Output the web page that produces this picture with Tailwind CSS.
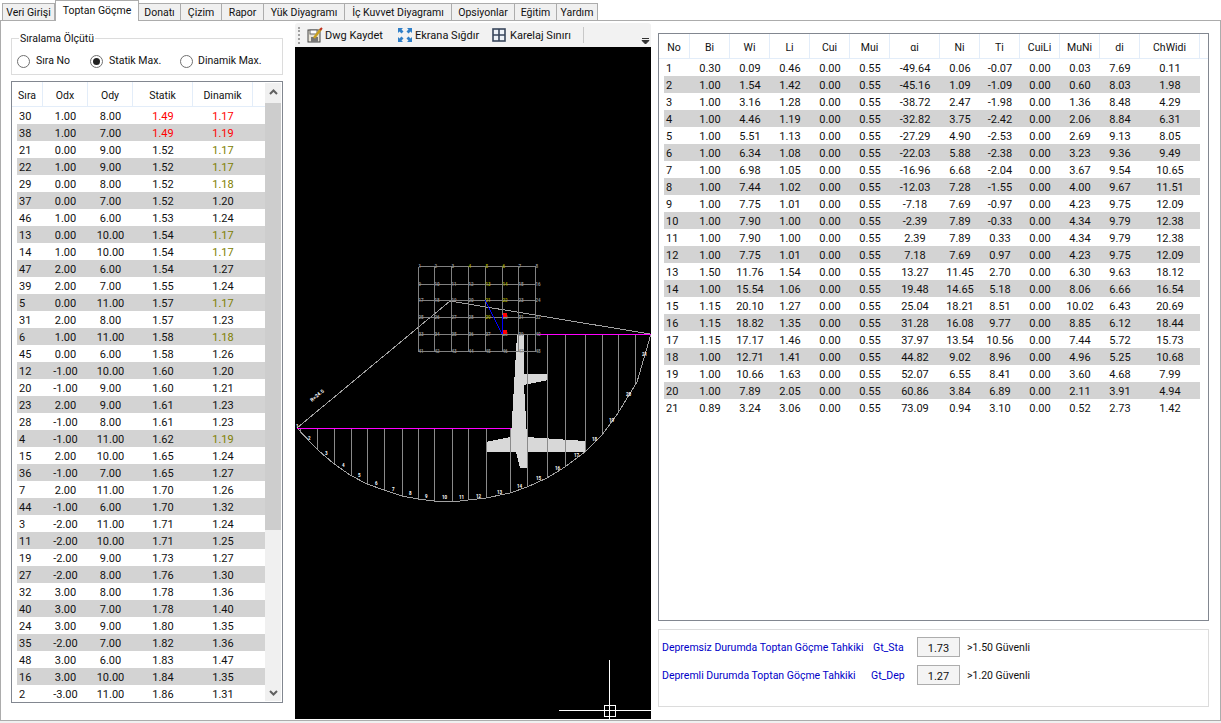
<!DOCTYPE html>
<html lang="en">

<head>
  <meta charset="UTF-8">
  <title>Toptan Göçme</title>
  <script src="https://cdn.jsdelivr.net/npm/@tailwindcss/browser@4"></script>
</head>

<body class="bg-[#f0f0f0] m-0 w-[1221px] h-[723px] overflow-hidden font-['Roboto'] text-[10.5px] text-[#111] leading-none">
  <!-- tabs -->
  <div class="h-[20px] bg-white flex items-end pl-[2px] relative z-10">
    <div class="w-[53px] h-[17px] pt-[2px] border border-b-0 border-[#acacac] bg-[#f0f0f0] flex items-center justify-center">Veri Girişi</div>
    <div class="w-[84px] h-[21px] -mb-px border border-b-0 border-[#acacac] bg-white flex items-center justify-center">Toptan Göçme</div>
    <div class="w-[42px] h-[17px] pt-[2px] border border-b-0 border-l-0 border-[#acacac] bg-[#f0f0f0] flex items-center justify-center">Donatı</div>
    <div class="w-[41px] h-[17px] pt-[2px] border border-b-0 border-l-0 border-[#acacac] bg-[#f0f0f0] flex items-center justify-center">Çizim</div>
    <div class="w-[42px] h-[17px] pt-[2px] border border-b-0 border-l-0 border-[#acacac] bg-[#f0f0f0] flex items-center justify-center">Rapor</div>
    <div class="w-[81px] h-[17px] pt-[2px] border border-b-0 border-l-0 border-[#acacac] bg-[#f0f0f0] flex items-center justify-center">Yük Diyagramı</div>
    <div class="w-[107px] h-[17px] pt-[2px] border border-b-0 border-l-0 border-[#acacac] bg-[#f0f0f0] flex items-center justify-center">İç Kuvvet Diyagramı</div>
    <div class="w-[63px] h-[17px] pt-[2px] border border-b-0 border-l-0 border-[#acacac] bg-[#f0f0f0] flex items-center justify-center">Opsiyonlar</div>
    <div class="w-[42px] h-[17px] pt-[2px] border border-b-0 border-l-0 border-[#acacac] bg-[#f0f0f0] flex items-center justify-center">Eğitim</div>
    <div class="w-[41px] h-[17px] pt-[2px] border border-b-0 border-l-0 border-[#acacac] bg-[#f0f0f0] flex items-center justify-center">Yardım</div>
  </div>

  <div class="h-[701px] bg-white border border-[#acacac] flex">
    <!-- left column -->
    <div class="ml-[10px] w-[272px] pt-[10px]">
      <fieldset class="h-[44px] border border-[#dcdcdc] flex items-center">
        <legend class="ml-[7px] px-[1px] leading-[15px]">Sıralama Ölçütü</legend>
        <div class="flex items-center pt-[3px]">
          <span class="ml-[5px] w-[13px] h-[13px] rounded-full border border-[#707070] bg-white"></span>
          <span class="ml-[6px] w-[54px]">Sıra No</span>
          <span class="w-[13px] h-[13px] rounded-full border border-[#707070] bg-white flex items-center justify-center"><span class="w-[7px] h-[7px] rounded-full bg-[#222]"></span></span>
          <span class="ml-[6px] w-[71px]">Statik Max.</span>
          <span class="w-[13px] h-[13px] rounded-full border border-[#707070] bg-white"></span>
          <span class="ml-[5px]">Dinamik Max.</span>
        </div>
      </fieldset>
      <div class="mt-[6px] h-[622px] border border-[#828790] flex">
        <div class="w-[253px]">
          <div class="h-[25px] flex border-b border-[#e3edf9]">
            <div class="w-[31px] pt-[4px] border-r border-[#e3edf9] flex items-center justify-center">Sıra</div>
            <div class="w-[45px] pt-[4px] border-r border-[#e3edf9] flex items-center justify-center">Odx</div>
            <div class="w-[45px] pt-[4px] border-r border-[#e3edf9] flex items-center justify-center">Ody</div>
            <div class="w-[60px] pt-[4px] border-r border-[#e3edf9] flex items-center justify-center">Statik</div>
            <div class="w-[60px] pt-[4px] border-r border-[#e3edf9] flex items-center justify-center">Dinamik</div>
            <div class="w-[12px]"></div>
          </div>
          <div id="left-rows" class="pl-[5px] text-[11px]"></div>
        </div>
        <div class="w-[16px] mt-px mb-px bg-[#f0f0f0] flex flex-col items-center">
          <svg class="mt-[6px] mb-[8px]" width="9" height="6" viewBox="0 0 9 6"><path d="M1 5 L4.5 1.5 L8 5" fill="none" stroke="#606060" stroke-width="2"/></svg>
          <div class="w-full h-[427px] bg-[#cdcdcd]"></div>
          <svg class="mt-auto mb-[5px]" width="9" height="6" viewBox="0 0 9 6"><path d="M1 1 L4.5 4.5 L8 1" fill="none" stroke="#606060" stroke-width="2"/></svg>
        </div>
      </div>
    </div>

    <!-- drawing column -->
    <div class="ml-[12px] w-[356px] pt-[2px] pb-px flex flex-col">
      <div class="h-[24px] bg-[#f2f2f2] rounded-t-[3px] flex items-center relative">
        <div class="ml-[3px] w-[2px] h-[17px] border-l-2 border-dotted border-[#a0a0a0]"></div>
        <svg class="ml-[7px]" width="16" height="16" viewBox="0 0 16 16">
          <rect x="1" y="3" width="12" height="12" fill="#e8e4d8" stroke="#444"/>
          <rect x="3" y="3" width="7" height="4" fill="#fff" stroke="#666"/>
          <rect x="4" y="10" width="7" height="5" fill="#777"/>
          <path d="M7 11 L14 2" stroke="#c8a020" stroke-width="2.5"/>
          <path d="M13 3 L15 1" stroke="#c03020" stroke-width="2"/>
        </svg>
        <span class="ml-[2px] w-[73px] text-[11px]">Dwg Kaydet</span>
        <svg width="14" height="14" viewBox="0 0 14 14" fill="#2f7fc8">
          <path d="M0 0 H5 L3.5 1.5 L5.5 3.5 L3.5 5.5 L1.5 3.5 L0 5 Z"/>
          <path d="M14 0 V5 L12.5 3.5 L10.5 5.5 L8.5 3.5 L10.5 1.5 L9 0 Z"/>
          <path d="M0 14 V9 L1.5 10.5 L3.5 8.5 L5.5 10.5 L3.5 12.5 L5 14 Z"/>
          <path d="M14 14 H9 L10.5 12.5 L8.5 10.5 L10.5 8.5 L12.5 10.5 L14 9 Z"/>
        </svg>
        <span class="ml-[3px] w-[77px] text-[11px]">Ekrana Sığdır</span>
        <svg width="14" height="14" viewBox="0 0 14 14" fill="none" stroke="#39465c" stroke-width="1.6">
          <rect x="1" y="1" width="12" height="12" fill="#eef2f8"/>
          <path d="M7 1 V13 M1 7 H13"/>
        </svg>
        <span class="ml-[4px] w-[73px] text-[11px]">Karelaj Sınırı</span>
        <div class="w-px h-[16px] bg-[#c8c8c8]"></div>
        <svg class="absolute right-[1px] bottom-[2px]" width="9" height="9" viewBox="0 0 9 9"><path d="M1 2.5 H8 M1 4.5 H8 L4.5 8 Z" fill="#333" stroke="#333"/></svg>
      </div>
      <div class="flex-1 bg-black">
        <svg id="cad" class="block w-full h-full" viewBox="295 47 356 672" shape-rendering="crispEdges">
          <!-- section body -->
          <polygon points="517,335 524,335 524,374 548,374 548,380 524,385 527,437 585,441 585,452 527,452 527,468 520,468 516,452 486,452 486,442 511,437 514,385" fill="#d8d8d8"/>
          <!-- slices -->
          <g stroke="#8a8a8a" fill="none">
            <path d="M300.5 428V433 M317.5 428V449 M334.5 428V463 M351.5 428V475 M367.5 428V484 M384.5 428V490 M402.5 428V496 M418.5 428V499 M434.5 428V501 M452.5 428V502 M468.5 428V500 M486.5 428V498 M510.5 428V493"/>
            <path d="M527.5 334V487 M547.5 334V478 M565.5 334V467 M585.5 334V452 M602.5 334V435 M618.5 334V413 M635.5 334V384"/>
            <polyline stroke="#a0a0a0" points="297,428 316.7,449 333,463 350,475 367,484 384,490 402,496 418,499 434,501 452,502 468,500 486,498 510,493 527,487 547,478 565,467 585,452 602,435 618,413 637,382 651,334"/>
            <polyline stroke="#a0a0a0" points="297,428 450,301 650,334"/>
          </g>
          <path d="M297 428.5H511 M537 334.5H651" stroke="#ff00ff" fill="none"/>
          <g id="grid-nodes"></g>
          <path d="M485 300L502 334 M502.5 315V334" stroke="#0000ff" fill="none"/>
          <rect x="503" y="313" width="4" height="4" fill="#ff0000"/>
          <rect x="503" y="330" width="4" height="4" fill="#ff0000"/>
          <text x="312" y="402" fill="#fff" font-family="Roboto" font-size="5" font-weight="700" transform="rotate(-40 312 402)">R=24.5</text>
          <g id="slice-labels" fill="#fff" font-family="Roboto" font-size="4.5" font-weight="700"></g>
          <!-- ucs mark -->
          <path d="M609.5 660V719 M559 710.5H651 M604.5 705.5H615.5V716.5H604.5Z" stroke="#fff" fill="none"/>
        </svg>
      </div>
    </div>

    <!-- right column -->
    <div class="ml-[7px] w-[551px] pt-[12px]">
      <div class="h-[588px] border border-[#828790]">
        <div class="h-[25px] flex border-b border-[#e3edf9]">
          <div class="w-[31px] pt-[4px] border-r border-[#e3edf9] flex items-center justify-center">No</div>
          <div class="w-[40px] pt-[4px] border-r border-[#e3edf9] flex items-center justify-center">Bi</div>
          <div class="w-[40px] pt-[4px] border-r border-[#e3edf9] flex items-center justify-center">Wi</div>
          <div class="w-[40px] pt-[4px] border-r border-[#e3edf9] flex items-center justify-center">Li</div>
          <div class="w-[40px] pt-[4px] border-r border-[#e3edf9] flex items-center justify-center">Cui</div>
          <div class="w-[40px] pt-[4px] border-r border-[#e3edf9] flex items-center justify-center">Mui</div>
          <div class="w-[50px] pt-[4px] border-r border-[#e3edf9] flex items-center justify-center">αi</div>
          <div class="w-[40px] pt-[4px] border-r border-[#e3edf9] flex items-center justify-center">Ni</div>
          <div class="w-[40px] pt-[4px] border-r border-[#e3edf9] flex items-center justify-center">Ti</div>
          <div class="w-[40px] pt-[4px] border-r border-[#e3edf9] flex items-center justify-center">CuiLi</div>
          <div class="w-[40px] pt-[4px] border-r border-[#e3edf9] flex items-center justify-center">MuNi</div>
          <div class="w-[40px] pt-[4px] border-r border-[#e3edf9] flex items-center justify-center">di</div>
          <div class="w-[60px] pt-[4px] border-r border-[#e3edf9] flex items-center justify-center">ChWidi</div>
        </div>
        <div id="right-rows" class="pl-[5px] text-[11px]"></div>
      </div>
      <div class="mt-[8px] h-[78px] border border-[#dcdcdc] pl-[3px] pt-[7px] text-[#0000c8]">
        <div class="h-[20px] flex items-center">
          <span class="w-[211px] pt-[2px] whitespace-nowrap">Depremsiz Durumda Toptan Göçme Tahkiki</span>
          <span class="w-[44px] pt-[2px]">Gt_Sta</span>
          <span class="w-[43px] h-[20px] pt-[2px] border border-[#adadad] bg-[#f4f4f4] text-[#111] text-[11px] flex items-center justify-center">1.73</span>
          <span class="ml-[7px] pt-[2px] text-[#111]">&gt;1.50 Güvenli</span>
        </div>
        <div class="mt-[8px] h-[20px] flex items-center">
          <span class="w-[209px] pt-[2px] whitespace-nowrap">Depremli Durumda Toptan Göçme Tahkiki</span>
          <span class="w-[46px] pt-[2px]">Gt_Dep</span>
          <span class="w-[43px] h-[20px] pt-[2px] border border-[#adadad] bg-[#f4f4f4] text-[#111] text-[11px] flex items-center justify-center">1.27</span>
          <span class="ml-[7px] pt-[2px] text-[#111]">&gt;1.20 Güvenli</span>
        </div>
      </div>
    </div>
  </div>

  <script>
    const leftData = [
      "30 1.00 8.00 1.49 1.17 r", "38 1.00 7.00 1.49 1.19 r", "21 0.00 9.00 1.52 1.17 o", "22 1.00 9.00 1.52 1.17 o",
      "29 0.00 8.00 1.52 1.18 o", "37 0.00 7.00 1.52 1.20", "46 1.00 6.00 1.53 1.24", "13 0.00 10.00 1.54 1.17 o",
      "14 1.00 10.00 1.54 1.17 o", "47 2.00 6.00 1.54 1.27", "39 2.00 7.00 1.55 1.24", "5 0.00 11.00 1.57 1.17 o",
      "31 2.00 8.00 1.57 1.23", "6 1.00 11.00 1.58 1.18 o", "45 0.00 6.00 1.58 1.26", "12 -1.00 10.00 1.60 1.20",
      "20 -1.00 9.00 1.60 1.21", "23 2.00 9.00 1.61 1.23", "28 -1.00 8.00 1.61 1.23", "4 -1.00 11.00 1.62 1.19 o",
      "15 2.00 10.00 1.65 1.24", "36 -1.00 7.00 1.65 1.27", "7 2.00 11.00 1.70 1.26", "44 -1.00 6.00 1.70 1.32",
      "3 -2.00 11.00 1.71 1.24", "11 -2.00 10.00 1.71 1.25", "19 -2.00 9.00 1.73 1.27", "27 -2.00 8.00 1.76 1.30",
      "32 3.00 8.00 1.78 1.36", "40 3.00 7.00 1.78 1.40", "24 3.00 9.00 1.80 1.35", "35 -2.00 7.00 1.82 1.36",
      "48 3.00 6.00 1.83 1.47", "16 3.00 10.00 1.84 1.35", "2 -3.00 11.00 1.86 1.31"
    ];
    document.getElementById('left-rows').innerHTML = leftData.map((line, i) => {
      const [sira, odx, ody, sta, din, flag] = line.split(' ');
      const bg = i % 2 ? 'bg-[#d3d3d3]' : '';
      const staColor = flag === 'r' ? 'text-[#ff0000]' : '';
      const dinColor = flag === 'r' ? 'text-[#ff0000]' : flag === 'o' ? 'text-[#808000]' : '';
      return `<div class="grid grid-cols-[26px_45px_45px_60px_60px] h-[17px] pt-px items-center ${bg}">
        <span class="pl-[2px]">${sira}</span><span class="text-center">${odx}</span><span class="text-center">${ody}</span>
        <span class="text-center ${staColor}">${sta}</span><span class="text-center ${dinColor}">${din}</span></div>`;
    }).join('');

    const rightData = [
      "1 0.30 0.09 0.46 0.00 0.55 -49.64 0.06 -0.07 0.00 0.03 7.69 0.11",
      "2 1.00 1.54 1.42 0.00 0.55 -45.16 1.09 -1.09 0.00 0.60 8.03 1.98",
      "3 1.00 3.16 1.28 0.00 0.55 -38.72 2.47 -1.98 0.00 1.36 8.48 4.29",
      "4 1.00 4.46 1.19 0.00 0.55 -32.82 3.75 -2.42 0.00 2.06 8.84 6.31",
      "5 1.00 5.51 1.13 0.00 0.55 -27.29 4.90 -2.53 0.00 2.69 9.13 8.05",
      "6 1.00 6.34 1.08 0.00 0.55 -22.03 5.88 -2.38 0.00 3.23 9.36 9.49",
      "7 1.00 6.98 1.05 0.00 0.55 -16.96 6.68 -2.04 0.00 3.67 9.54 10.65",
      "8 1.00 7.44 1.02 0.00 0.55 -12.03 7.28 -1.55 0.00 4.00 9.67 11.51",
      "9 1.00 7.75 1.01 0.00 0.55 -7.18 7.69 -0.97 0.00 4.23 9.75 12.09",
      "10 1.00 7.90 1.00 0.00 0.55 -2.39 7.89 -0.33 0.00 4.34 9.79 12.38",
      "11 1.00 7.90 1.00 0.00 0.55 2.39 7.89 0.33 0.00 4.34 9.79 12.38",
      "12 1.00 7.75 1.01 0.00 0.55 7.18 7.69 0.97 0.00 4.23 9.75 12.09",
      "13 1.50 11.76 1.54 0.00 0.55 13.27 11.45 2.70 0.00 6.30 9.63 18.12",
      "14 1.00 15.54 1.06 0.00 0.55 19.48 14.65 5.18 0.00 8.06 6.66 16.54",
      "15 1.15 20.10 1.27 0.00 0.55 25.04 18.21 8.51 0.00 10.02 6.43 20.69",
      "16 1.15 18.82 1.35 0.00 0.55 31.28 16.08 9.77 0.00 8.85 6.12 18.44",
      "17 1.15 17.17 1.46 0.00 0.55 37.97 13.54 10.56 0.00 7.44 5.72 15.73",
      "18 1.00 12.71 1.41 0.00 0.55 44.82 9.02 8.96 0.00 4.96 5.25 10.68",
      "19 1.00 10.66 1.63 0.00 0.55 52.07 6.55 8.41 0.00 3.60 4.68 7.99",
      "20 1.00 7.89 2.05 0.00 0.55 60.86 3.84 6.89 0.00 2.11 3.91 4.94",
      "21 0.89 3.24 3.06 0.00 0.55 73.09 0.94 3.10 0.00 0.52 2.73 1.42"
    ];
    document.getElementById('right-rows').innerHTML = rightData.map((line, i) => {
      const cells = line.split(' ');
      const bg = i % 2 ? 'bg-[#d3d3d3]' : '';
      return `<div class="w-[536px] grid grid-cols-[26px_40px_40px_40px_40px_40px_50px_40px_40px_40px_40px_40px_60px] h-[17px] pt-px items-center ${bg}">` +
        cells.map((c, j) => `<span class="${j ? 'text-center' : 'pl-[2px]'}">${c}</span>`).join('') + '</div>';
    }).join('');

    // kolon/kiriş aksları ve düğüm numaraları
    const xs = [418.5, 434.5, 451.5, 468.5, 485.5, 502.5, 518.5, 535.5];
    const ys = [266.5, 284.5, 300.5, 317.5, 334.5, 351.5];
    const olive = ['0,3', '0,4', '0,5', '1,4', '1,5', '2,4', '2,5', '3,4'];
    let grid = `<path stroke="#808080" fill="none" d="${xs.map(x => `M${x} ${ys[0]}V${ys[5]}`).join(' ')} ${ys.map(y => `M${xs[0]} ${y}H${xs[7]}`).join(' ')}"/>`;
    ys.forEach((y, r) => xs.forEach((x, c) => {
      const fill = olive.includes(r + ',' + c) ? '#a0a000' : '#909090';
      grid += `<text x="${x}" y="${y + 1}" fill="${fill}" font-family="Roboto" font-size="4.5" font-weight="700">${r * 8 + c + 1}</text>`;
    }));
    document.getElementById('grid-nodes').innerHTML = grid;

    const labelPos = [[297, 426], [309, 438], [326, 453], [343, 465], [359, 475], [376, 483], [393, 489], [410, 493], [426, 496], [443, 497], [460, 497],
      [477, 496], [498, 492], [518, 486], [537, 478], [556, 468], [575, 455], [593, 439], [610, 420], [627, 394], [643, 354]];
    document.getElementById('slice-labels').innerHTML = labelPos.map((p, i) => `<text x="${p[0] - 1}" y="${p[1] + 2}">${i + 1}</text>`).join('');
  </script>
</body>

</html>
